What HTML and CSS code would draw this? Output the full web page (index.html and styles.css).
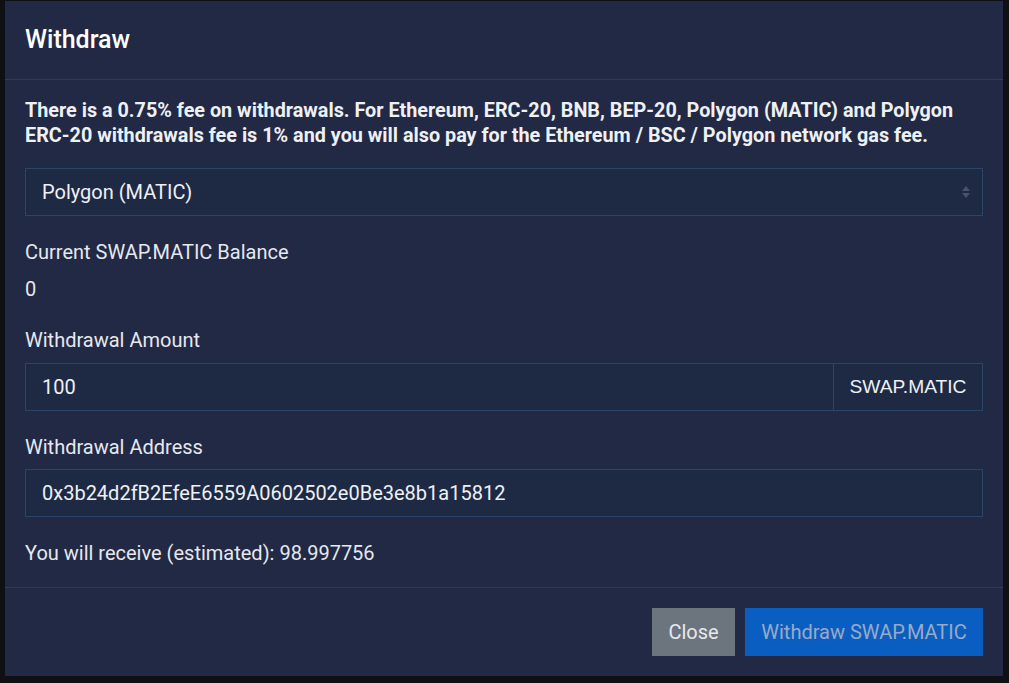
FILE: index.html
```html
<!DOCTYPE html>
<html lang="en">
<head>
<meta charset="utf-8">
<title>Withdraw</title>
<link rel="stylesheet" href="styles.css">
</head>
<body>
<div class="backdrop">
  <div class="modal">
    <div class="modal-header">
      <h2 class="modal-title">Withdraw</h2>
    </div>
    <div class="modal-body">
      <p class="notice">There is a 0.75% fee on withdrawals. For Ethereum, ERC-20, BNB, BEP-20, Polygon (MATIC) and Polygon ERC-20 withdrawals fee is 1% and you will also pay for the Ethereum / BSC / Polygon network gas fee.</p>
      <div class="select">
        <span>Polygon (MATIC)</span>
        <svg class="chev" width="10" height="16" viewBox="0 0 10 16"><path d="M5 2 L9 7 H1 Z" fill="#4b5166"/><path d="M5 14 L9 9 H1 Z" fill="#4b5166"/></svg>
      </div>
      <div class="label first">Current SWAP.MATIC Balance</div>
      <div class="value">0</div>
      <div class="label amount">Withdrawal Amount</div>
      <div class="input-group">
        <div class="input grow">100</div>
        <div class="addon">SWAP.MATIC</div>
      </div>
      <div class="label address">Withdrawal Address</div>
      <div class="input">0x3b24d2fB2EfeE6559A0602502e0Be3e8b1a15812</div>
      <div class="label receive">You will receive (estimated): 98.997756</div>
    </div>
    <div class="modal-footer">
      <button class="btn btn-secondary">Close</button>
      <button class="btn btn-primary">Withdraw SWAP.MATIC</button>
    </div>
  </div>
</div>
</body>
</html>
```
FILE: styles.css
```css
* { box-sizing: border-box; }
html, body { margin: 0; padding: 0; }
body {
  background: #0e1014;
  font-family: Roboto, "Liberation Sans", Arial, sans-serif;
  color: #eceef2;
  width: 1009px;
  height: 683px;
  overflow: hidden;
}
.backdrop {
  padding: 1px 6px 0 5px;
}
.modal {
  background: #212945;
  width: 998px;
  height: 675px;
  display: flex;
  flex-direction: column;
}
.modal-header {
  height: 79px;
  border-bottom: 1px solid #323b56;
  padding: 0 20px;
  display: flex;
  align-items: center;
}
.modal-title {
  margin: 0;
  font-size: 25px;
  font-weight: 500;
  color: #ffffff;
  line-height: 1;
  padding-bottom: 2px;
}
.modal-body {
  padding: 18px 20px 0 20px;
  display: flex;
  flex-direction: column;
  height: 508px;
  border-bottom: 1px solid #323b56;
}
.notice {
  margin: 0;
  font-size: 19.8px;
  font-weight: 700;
  line-height: 25px;
  color: #eef0f4;
}
.select {
  margin-top: 20px;
  height: 48px;
  background: #1e2a44;
  border: 1px solid #2b4467;
  display: flex;
  align-items: center;
  justify-content: space-between;
  padding: 0 16px;
  font-size: 20px;
  color: #eef0f4;
}
.chev { margin-right: -5px; }
.label, .value {
  font-size: 20px;
  line-height: 27px;
  color: #e6e8ee;
}
.label { margin-top: 24px; margin-bottom: 9px; }
.label.first { margin-top: 23px; margin-bottom: 10px; }
.label.address { margin-top: 23px; margin-bottom: 8px; }
.label.receive { margin-top: 23px; margin-bottom: 0; }
.input-group {
  display: flex;
  height: 48px;
}
.input {
  height: 48px;
  background: #1e2a44;
  border: 1px solid #2b4467;
  display: flex;
  align-items: center;
  padding: 0 16px;
  font-size: 20px;
  color: #eef0f4;
}
.input.grow { flex: 1; }
.addon {
  width: 149px;
  height: 48px;
  background: #1e2a44;
  border: 1px solid #2b4467;
  border-left: none;
  display: flex;
  align-items: center;
  justify-content: center;
  font-size: 19.2px;
  font-family: "Liberation Sans", Arial, sans-serif;
  color: #eef0f4;
}
.modal-footer {
  flex: 1;
  display: flex;
  justify-content: flex-end;
  align-items: flex-start;
  gap: 10px;
  padding: 20px 20px 0 0;
}
.btn {
  height: 48px;
  border: none;
  border-radius: 0;
  font-family: Roboto, "Liberation Sans", Arial, sans-serif;
  font-size: 20px;
  padding: 0;
}
.btn-secondary {
  background: #6c757d;
  color: #e6e9ee;
  width: 83px;
}
.btn-primary {
  background: #0b5ec1;
  color: #9aaac6;
  width: 238px;
}
```
